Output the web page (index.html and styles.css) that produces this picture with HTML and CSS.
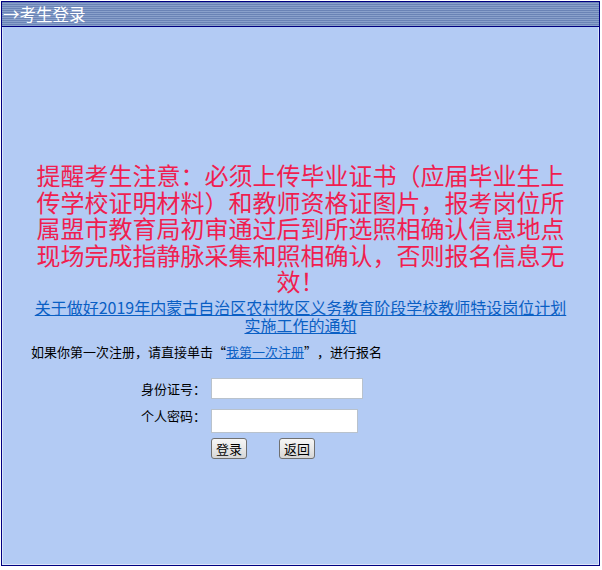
FILE: index.html
```html
<!DOCTYPE html>
<html lang="zh-CN">
<head>
    <meta charset="UTF-8">
    <title>考生登录</title>
    <link rel="stylesheet" href="styles.css">
</head>
<body>
    <div class="frame">
        <div class="frame-title">→考生登录</div>

        <div class="frame-body">
            <p class="notice">提醒考生注意：必须上传毕业证书（应届毕业生上传学校证明材料）和教师资格证图片，报考岗位所属盟市教育局初审通过后到所选照相确认信息地点现场完成指静脉采集和照相确认，否则报名信息无效！</p>

            <p class="notice-link"><a href="#">关于做好2019年内蒙古自治区农村牧区义务教育阶段学校教师特设岗位计划实施工作的通知</a></p>

            <p class="first-time">如果你第一次注册，请直接单击<span class="quote">“</span><a href="#">我第一次注册</a><span class="quote">”</span>，进行报名</p>

            <form class="login-form">
                <label class="field-label" for="idcard">身份证号：</label>
                <input class="field field-id" type="text" id="idcard">

                <label class="field-label" for="pwd">个人密码：</label>
                <input class="field field-pwd" type="password" id="pwd">

                <div class="buttons">
                    <button type="button" class="btn">登录</button>
                    <button type="button" class="btn">返回</button>
                </div>
            </form>
        </div>
    </div>
</body>
</html>
```

FILE: styles.css
```css
/* Base */
body, html {
    margin: 0;
    padding: 0;
    background: #ffffff;
    font-family: "Noto Sans CJK SC", "Liberation Sans", sans-serif;
}

body {
    padding: 1px;
}

/* Outer frame */
.frame {
    width: 599px;
    height: 565px;
    box-sizing: border-box;
    border: 1px solid #000080;
    display: flex;
    flex-direction: column;
}

.frame-title {
    height: 24px;
    line-height: 24px;
    padding-left: 1px;
    font-size: 16.5px;
    color: #ffffff;
    border-bottom: 1px solid #000080;
    background: repeating-linear-gradient(180deg, #6a83b5 0, #6a83b5 1px, #8aa1cb 1px, #8aa1cb 2px);
}

.frame-body {
    flex: 1;
    background-color: #b3cbf4;
    border-left: 1px solid #dbe6fa;
    border-right: 1px solid #dbe6fa;
    border-bottom: 1px solid #dbe6fa;
    padding-top: 135px;
}

/* Red notice */
.notice {
    width: 540px;
    margin: 0 auto;
    text-align: center;
    font-size: 24px;
    line-height: 26.5px;
    color: #f01e50;
}

.notice-link {
    width: 540px;
    margin: 3px auto 0;
    text-align: center;
    font-size: 16px;
    line-height: 18px;
}

.notice-link a,
.first-time a {
    color: #0a5fc4;
    text-decoration: underline;
}

.first-time {
    margin: 8px 0 0;
    padding-left: 28px;
    font-size: 13px;
    line-height: 20px;
    color: #000000;
}

/* full-width quote marks, as in the original font */
.quote {
    display: inline-block;
    width: 13px;
}

.quote:first-child,
.first-time .quote:first-of-type {
    text-align: right;
}

.first-time .quote:last-of-type {
    text-align: left;
}

/* Login form */
.login-form {
    margin-top: 16px;
    display: grid;
    grid-template-columns: 203px auto;
    column-gap: 5px;
    align-items: center;
}

.field-label {
    text-align: right;
    font-size: 13px;
    color: #000000;
}

.field {
    box-sizing: border-box;
    height: 21px;
    border: 1px solid #b9c2cc;
    background: #ffffff;
    padding: 0 2px;
    margin: 0;
}

.field-id {
    width: 152px;
}

.field-pwd {
    width: 147px;
    height: 24px;
    margin-top: 10px;
}

.buttons {
    grid-column: 2;
    margin-top: 5px;
    display: flex;
    gap: 32px;
}

.btn {
    box-sizing: border-box;
    width: 36px;
    height: 21px;
    padding: 0;
    font-family: "Noto Sans CJK SC", sans-serif;
    font-size: 13px;
    line-height: 19px;
    color: #000000;
    border: 1px solid #707070;
    border-radius: 3px;
    background: linear-gradient(180deg, #f6f6f6 0%, #e8e8e8 50%, #d6d6d6 100%);
}
```
